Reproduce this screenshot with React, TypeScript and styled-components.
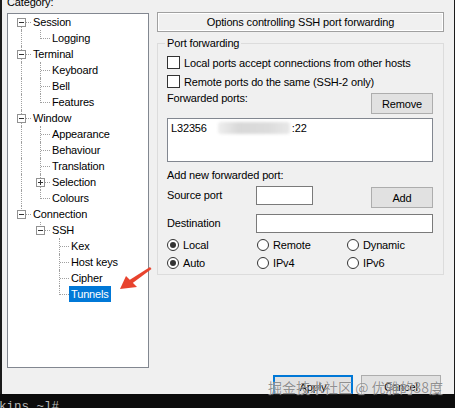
import React from 'react';
import styled, { createGlobalStyle } from 'styled-components';

const GlobalStyle = createGlobalStyle`
  html, body { margin: 0; padding: 0; background: #0c0c0c; }
  * { box-sizing: border-box; }
`;

const Screen = styled.div`
  position: relative;
  width: 455px;
  height: 408px;
  overflow: hidden;
  display: flex;
  flex-direction: column;
  background: #0c0c0c;
`;

const Upper = styled.div`
  display: flex;
  height: 394px;
  flex: 0 0 394px;
`;

const Edge = styled.div<{ $w: number }>`
  flex: 0 0 ${(p) => p.$w}px;
  background: #1b1b1b;
`;

const Dialog = styled.div`
  flex: 1;
  background: #f0f0f0;
  overflow: hidden;
  display: flex;
  flex-direction: column;
  padding: 0 10px 0 5px;
  font-family: "Liberation Sans", Arial, sans-serif;
  font-size: 11px;
  letter-spacing: -0.15px;
  color: #000;
`;

const Body = styled.div`
  display: grid;
  grid-template-columns: 142px 287px;
  column-gap: 8px;
`;

const LeftCol = styled.div`
  display: flex;
  flex-direction: column;
`;

const CategoryLabel = styled.div`
  margin-top: -5px;
  height: 14px;
  line-height: 14px;
`;

const TreeBox = styled.div`
  margin-top: 4px;
  height: 355px;
  background: #fff;
  border: 1px solid #828790;
  padding: 0 0 0 4px;
`;

const TreeRow = styled.div`
  display: flex;
  height: 16px;
  align-items: center;
`;

const Cell = styled.span`
  position: relative;
  flex: 0 0 19px;
  height: 16px;
`;

const VLine = styled.span<{ $from: number; $to: number }>`
  position: absolute;
  left: 9px;
  top: ${(p) => p.$from}px;
  height: ${(p) => p.$to - p.$from}px;
  border-left: 1px dotted #a0a0a0;
`;

const HLine = styled.span`
  position: absolute;
  left: 10px;
  top: 8px;
  width: 9px;
  border-top: 1px dotted #a0a0a0;
`;

const ExpandBox = styled.span`
  position: absolute;
  left: 5px;
  top: 4px;
  width: 9px;
  height: 9px;
  border: 1px solid #919191;
  background: #fff;
  display: grid;
  place-items: center;
`;

const Sign = styled.span<{ $plus: boolean }>`
  position: relative;
  width: 5px;
  height: 1px;
  background: #333;
  &::after {
    content: '';
    display: ${(p) => (p.$plus ? 'block' : 'none')};
    position: absolute;
    left: 2px;
    top: -2px;
    width: 1px;
    height: 5px;
    background: #333;
  }
`;

const NodeLabel = styled.span<{ $selected: boolean }>`
  line-height: 16px;
  height: 16px;
  padding: 0 2px;
  white-space: nowrap;
  background: ${(p) => (p.$selected ? '#0078d7' : 'transparent')};
  color: ${(p) => (p.$selected ? '#fff' : '#000')};
`;

const Panel = styled.div`
  display: flex;
  flex-direction: column;
  padding-top: 12px;
`;

const Header = styled.div`
  height: 20px;
  border: 1px solid #a0a0a0;
  box-shadow: inset 0 0 0 1px #fff;
  text-align: center;
  line-height: 18px;
`;

const Group = styled.fieldset`
  margin: 5px 0 0 0;
  min-width: 0;
  border: 1px solid #dcdcdc;
  padding: 0 10px 2px 9px;
  display: flex;
  flex-direction: column;
`;

const Legend = styled.legend`
  margin-left: -2px;
  padding: 0 2px;
  line-height: 13px;
`;

const CheckRow = styled.label`
  display: flex;
  align-items: center;
  gap: 4px;
  height: 19px;
`;

const FirstCheckRow = styled(CheckRow)`
  margin-top: 3px;
`;

const CheckBox = styled.span`
  flex: 0 0 13px;
  width: 13px;
  height: 13px;
  border: 1px solid #333;
  background: #fff;
`;

const PortsHead = styled.div`
  display: flex;
  justify-content: space-between;
  align-items: flex-start;
`;

const Text = styled.span<{ $lh?: number }>`
  line-height: ${(p) => p.$lh ?? 14}px;
  white-space: nowrap;
`;

const Button = styled.div<{ $w: number; $h: number; $mt?: number; $default?: boolean }>`
  width: ${(p) => p.$w}px;
  height: ${(p) => p.$h}px;
  margin-top: ${(p) => p.$mt ?? 0}px;
  background: #e1e1e1;
  border: ${(p) => (p.$default ? '2px solid #0078d7' : '1px solid #adadad')};
  display: flex;
  align-items: center;
  justify-content: center;
  white-space: nowrap;
`;

const ListBox = styled.div`
  margin-top: 4px;
  height: 44px;
  background: #fff;
  border: 1px solid #828790;
  padding: 2px 3px;
  display: flex;
  align-items: flex-start;
  line-height: 14px;
`;

const Blurred = styled.span`
  display: inline-block;
  width: 72px;
  height: 12px;
  margin: 1px 2px 0 11px;
  background: linear-gradient(90deg, #eeeeee 0%, #d8d8d8 30%, #dcdcdc 70%, #e8e8e8 100%);
  filter: blur(1.5px);
  border-radius: 3px;
`;

const SubLabel = styled.div`
  margin-top: 6px;
  line-height: 14px;
`;

const FormRow = styled.div<{ $mt: number; $cols: string }>`
  margin-top: ${(p) => p.$mt}px;
  display: grid;
  grid-template-columns: ${(p) => p.$cols};
  align-items: start;
`;

const Input = styled.div`
  height: 19px;
  background: #fff;
  border: 1px solid #7a7a7a;
`;

const RadioGrid = styled.div`
  margin-top: 3px;
  display: grid;
  grid-template-columns: 90px 90px 1fr;
  grid-auto-rows: 18px;
`;

const RadioItem = styled.label`
  display: flex;
  align-items: center;
  gap: 4px;
`;

const RadioCircle = styled.span<{ $on: boolean }>`
  flex: 0 0 12px;
  width: 12px;
  height: 12px;
  border-radius: 50%;
  border: 1px solid #333;
  background: #fff;
  display: grid;
  place-items: center;
  &::after {
    content: '';
    display: ${(p) => (p.$on ? 'block' : 'none')};
    width: 6px;
    height: 6px;
    border-radius: 50%;
    background: #333;
  }
`;

const ButtonRow = styled.div`
  margin-top: 7px;
  display: flex;
  justify-content: flex-end;
  gap: 8px;
  padding-right: 3px;
`;

const Terminal = styled.div`
  flex: 0 0 14px;
  height: 14px;
  overflow: hidden;
  background: #0c0c0c;
  color: #b8b8b8;
  font-family: "Liberation Mono", "DejaVu Sans Mono", monospace;
  font-size: 12.5px;
  line-height: 14px;
  padding-top: 6px;
  margin-left: -1px;
  white-space: pre;
`;

const Watermark = styled.div`
  position: absolute;
  left: 268px;
  top: 378px;
  font-family: "Noto Sans CJK SC", sans-serif;
  font-size: 14px;
  line-height: 18px;
  color: rgba(110, 110, 110, 0.75);
  text-shadow: 0 0 1px rgba(255, 255, 255, 0.9);
  white-space: nowrap;
  pointer-events: none;
`;

const ArrowSvg = styled.svg`
  position: absolute;
  left: 115px;
  top: 262px;
  pointer-events: none;
`;

type Node = { label: string; level: number; box?: 'minus' | 'plus'; selected?: boolean };

const nodes: Node[] = [
  { label: 'Session', level: 0, box: 'minus' },
  { label: 'Logging', level: 1 },
  { label: 'Terminal', level: 0, box: 'minus' },
  { label: 'Keyboard', level: 1 },
  { label: 'Bell', level: 1 },
  { label: 'Features', level: 1 },
  { label: 'Window', level: 0, box: 'minus' },
  { label: 'Appearance', level: 1 },
  { label: 'Behaviour', level: 1 },
  { label: 'Translation', level: 1 },
  { label: 'Selection', level: 1, box: 'plus' },
  { label: 'Colours', level: 1 },
  { label: 'Connection', level: 0, box: 'minus' },
  { label: 'SSH', level: 1, box: 'minus' },
  { label: 'Kex', level: 2 },
  { label: 'Host keys', level: 2 },
  { label: 'Cipher', level: 2 },
  { label: 'Tunnels', level: 2, selected: true },
];

type Col = { up: boolean; down: boolean; right: boolean; box?: 'minus' | 'plus' };

function hasNextSibling(idx: number, lvl: number): boolean {
  for (let j = idx + 1; j < nodes.length; j++) {
    if (nodes[j].level < lvl) return false;
    if (nodes[j].level === lvl) return true;
  }
  return false;
}

function columnsFor(i: number): Col[] {
  const n = nodes[i];
  const cols: Col[] = [];
  for (let a = 0; a < n.level; a++) {
    let k = i - 1;
    while (k >= 0 && nodes[k].level !== a) k--;
    const cont = hasNextSibling(k, a);
    cols.push({ up: cont, down: cont, right: false });
  }
  cols.push({ up: i > 0, down: hasNextSibling(i, n.level), right: true, box: n.box });
  return cols;
}

function TreeCell({ col }: { col: Col }) {
  const show = col.up || col.down;
  const from = col.up ? 0 : 8;
  const to = col.down ? 16 : 9;
  return (
    <Cell>
      {show && <VLine $from={from} $to={to} />}
      {col.right && <HLine />}
      {col.box && (
        <ExpandBox>
          <Sign $plus={col.box === 'plus'} />
        </ExpandBox>
      )}
    </Cell>
  );
}

function Tree() {
  return (
    <TreeBox>
      {nodes.map((n, i) => (
        <TreeRow key={n.label}>
          {columnsFor(i).map((c, ci) => (
            <TreeCell key={ci} col={c} />
          ))}
          <NodeLabel $selected={!!n.selected}>{n.label}</NodeLabel>
        </TreeRow>
      ))}
    </TreeBox>
  );
}

const radios: { label: string; on: boolean }[] = [
  { label: 'Local', on: true },
  { label: 'Remote', on: false },
  { label: 'Dynamic', on: false },
  { label: 'Auto', on: true },
  { label: 'IPv4', on: false },
  { label: 'IPv6', on: false },
];

export default function App() {
  return (
    <Screen>
      <GlobalStyle />
      <Upper>
        <Edge $w={2} />
        <Dialog>
          <Body>
            <LeftCol>
              <CategoryLabel>Category:</CategoryLabel>
              <Tree />
            </LeftCol>
            <Panel>
              <Header>Options controlling SSH port forwarding</Header>
              <Group>
                <Legend>Port forwarding</Legend>
                <FirstCheckRow>
                  <CheckBox />
                  <Text>Local ports accept connections from other hosts</Text>
                </FirstCheckRow>
                <CheckRow>
                  <CheckBox />
                  <Text>Remote ports do the same (SSH-2 only)</Text>
                </CheckRow>
                <PortsHead>
                  <Text>Forwarded ports:</Text>
                  <Button $w={62} $h={21} $mt={2}>Remove</Button>
                </PortsHead>
                <ListBox>
                  <span>L32356</span>
                  <Blurred />
                  <span>:22</span>
                </ListBox>
                <SubLabel>Add new forwarded port:</SubLabel>
                <FormRow $mt={4} $cols="89px 57px 1fr 62px">
                  <Text $lh={19}>Source port</Text>
                  <Input />
                  <span />
                  <Button $w={62} $h={21} $mt={1}>Add</Button>
                </FormRow>
                <FormRow $mt={6} $cols="89px 1fr">
                  <Text $lh={19}>Destination</Text>
                  <Input />
                </FormRow>
                <RadioGrid>
                  {radios.map((r) => (
                    <RadioItem key={r.label}>
                      <RadioCircle $on={r.on} />
                      <Text>{r.label}</Text>
                    </RadioItem>
                  ))}
                </RadioGrid>
              </Group>
            </Panel>
          </Body>
          <ButtonRow>
            <Button $w={80} $h={23} $default>Apply</Button>
            <Button $w={80} $h={23}>Cancel</Button>
          </ButtonRow>
        </Dialog>
        <Edge $w={1} />
      </Upper>
      <Terminal>kins ~]#</Terminal>
      <Watermark>掘金技术社区 @ 优雅的38度</Watermark>
      <ArrowSvg width="40" height="32" viewBox="0 0 40 32">
        <polygon points="35,5 36.5,7 17,21.5 14.5,18" fill="#e8432e" />
        <polygon points="5,27 11,14 22,25" fill="#e8432e" />
      </ArrowSvg>
    </Screen>
  );
}
